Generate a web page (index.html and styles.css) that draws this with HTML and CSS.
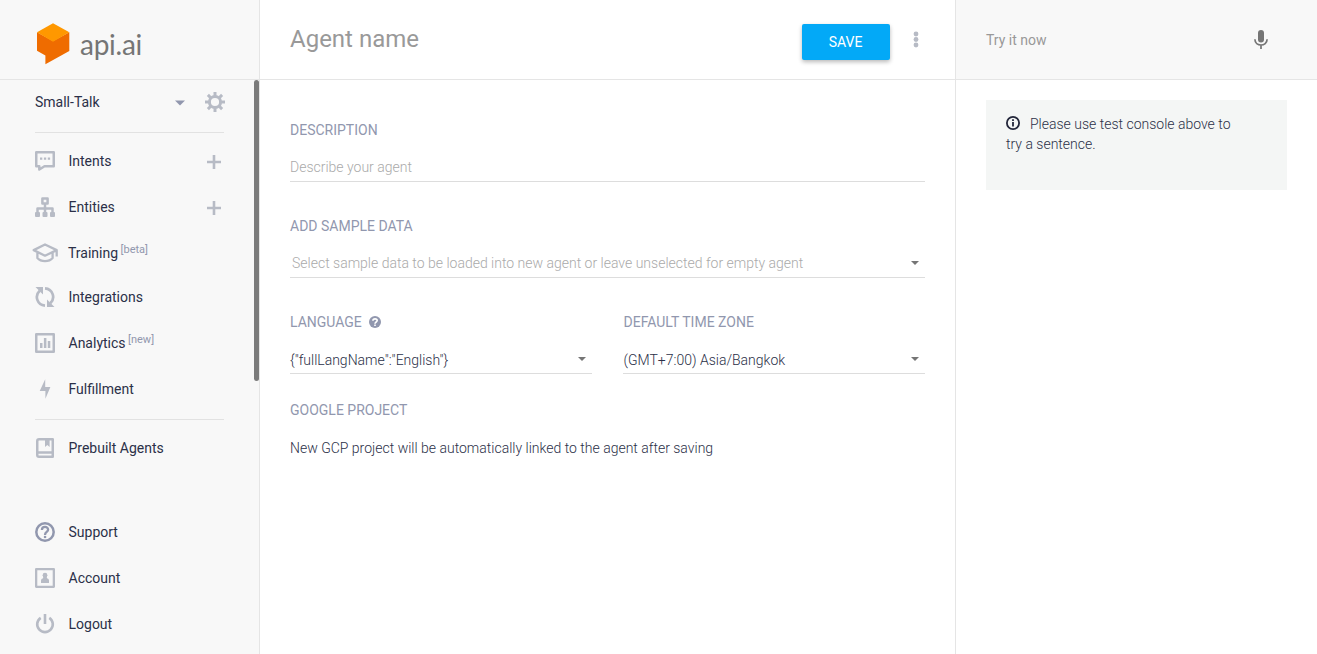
FILE: index.html
```html
<!DOCTYPE html>
<html lang="en">
<head>
<meta charset="utf-8">
<title>Agent</title>
<link rel="stylesheet" href="styles.css">
</head>
<body>
<div class="app">
  <aside class="sidebar">
    <div class="brand">
      <svg class="brand-mark" width="33" height="42" viewBox="0 0 33 42"><path fill="#ef6c00" d="M0 9.3 16 18 32.3 9.3V28L8.4 41.2V32.4L0 27.7z"/><path fill="#ff9800" d="M16 .2 32.3 9.3 16 18.7 0 9.3z"/></svg>
      <span class="brand-name">api.ai</span>
    </div>
    <div class="scroll-thumb"></div>
    <div class="agent">
      <span class="agent-name">Small-Talk</span>
      <svg class="agent-caret" width="10" height="6" viewBox="0 0 10 6"><path d="M0 .5h10L5 5.5z"/></svg>
      <svg class="gear" width="20" height="20" viewBox="0 0 20 20"><circle cx="10" cy="10" r="5.6" fill="none" stroke="currentColor" stroke-width="3"/><path stroke="currentColor" stroke-width="3" d="M10 0v4M10 16v4M0 10h4M16 10h4M2.900 2.900l2.800 2.800M14.300 14.300l2.800 2.800M17.100 2.900l-2.800 2.800M5.700 14.300l-2.800 2.800"/></svg>
    </div>
    <nav class="menu">
      <a class="item"><span class="icon"><svg width="20" height="20" viewBox="0 0 20 20"><path fill="none" stroke="currentColor" stroke-width="2.500" stroke-linejoin="round" d="M1.250 1.250h17.500v14H9.500l-5.200 3.300v-3.300H1.250z"/><path fill="currentColor" d="M5 6.500h2.300v2.300H5zM8.900 6.500h2.300v2.300H8.900zM12.800 6.500h2.300v2.300h-2.300z"/></svg></span>Intents<svg class="plus" width="14" height="14" viewBox="0 0 14 14"><path d="M7 0v14M0 7h14"/></svg></a>
      <a class="item"><span class="icon"><svg width="20" height="20" viewBox="0 0 20 20"><path fill="none" stroke="currentColor" stroke-width="2.500" stroke-linejoin="round" d="M7.400 1.500h5.200v5H7.400zM10 6.500V16M2.500 16v-4.500h15V16"/><rect x="0" y="15" width="5" height="5" rx="1" fill="currentColor"/><rect x="7.500" y="15" width="5" height="5" rx="1" fill="currentColor"/><rect x="15" y="15" width="5" height="5" rx="1" fill="currentColor"/></svg></span>Entities<svg class="plus" width="14" height="14" viewBox="0 0 14 14"><path d="M7 0v14M0 7h14"/></svg></a>
      <a class="item item-training"><span class="icon"><svg width="26" height="20" viewBox="0 0 26 20"><path fill="none" stroke="currentColor" stroke-width="2.300" stroke-linejoin="round" d="M1.700 7.100 13 1.500l11.700 5.600L13 12.700zM5.400 9v6c3.600 4.200 11.600 4.200 15.200 0V9M24.700 7v6.500"/></svg></span>Training<sup>[beta]</sup></a>
      <a class="item"><span class="icon"><svg width="20" height="20" viewBox="0 0 20 20"><path fill="none" stroke="currentColor" stroke-width="2.700" d="M10 18.600C2.200 18 -.8 9 4.700 3.800M10 1.400c7.800.6 10.800 9.600 5.300 14.800"/><path fill="currentColor" d="M.5 0H8v7.500zM19.500 20H12v-7.500z"/></svg></span>Integrations</a>
      <a class="item"><span class="icon"><svg width="20" height="20" viewBox="0 0 20 20"><path fill="none" stroke="currentColor" stroke-width="2.500" stroke-linejoin="round" d="M1.250 1.250h17.500v17.500H1.250z"/><path fill="currentColor" d="M5 10h2.500v5H5zM8.900 5h2.500v10H8.900zM12.800 8h2.500v7h-2.500z"/></svg></span>Analytics<sup>[new]</sup></a>
      <a class="item"><span class="icon"><svg width="20" height="20" viewBox="0 0 20 20"><path fill="currentColor" d="M10.200 .2V8h5.200L10.400 19.800V12H4.700z"/></svg></span>Fulfillment</a>
    </nav>
    <nav class="menu menu-prebuilt">
      <a class="item"><span class="icon"><svg width="20" height="20" viewBox="0 0 20 20"><path fill="none" stroke="currentColor" stroke-width="2.500" stroke-linejoin="round" d="M4 1.250h13.750v17.500H4Q2.250 18.750 2.250 17V3Q2.250 1.250 4 1.250zM2.250 14.500h15.500"/><path fill="currentColor" d="M10 1h4.600v8L12.300 7 10 9z"/></svg></span>Prebuilt Agents</a>
    </nav>
    <nav class="menu menu-user">
      <a class="item"><span class="icon icon-dark"><svg width="20" height="20" viewBox="0 0 20 20"><circle cx="10" cy="10" r="8.700" fill="none" stroke="currentColor" stroke-width="2.500"/><path fill="none" stroke="currentColor" stroke-width="2.300" d="M6.900 8c0-4 6.200-4 6.200-.3C13.100 10 10 9.900 10 12.900"/><path fill="currentColor" d="M8.900 13.900h2.300v2.200H8.900z"/></svg></span>Support</a>
      <a class="item"><span class="icon"><svg width="20" height="20" viewBox="0 0 20 20"><path fill="none" stroke="currentColor" stroke-width="2.300" stroke-linejoin="round" d="M1.150 1.150h17.700v17.700H1.150z"/><circle cx="10" cy="7.200" r="2.400" fill="currentColor"/><path fill="currentColor" d="M8.500 8h3l.5 2.200q2 .5 2 2.300V15H6v-2.500q0-1.800 2-2.300z"/></svg></span>Account</a>
      <a class="item"><span class="icon"><svg width="20" height="20" viewBox="0 0 20 20"><path fill="none" stroke="currentColor" stroke-width="2.600" d="M10 0v10M5.700 3.800a7.800 7.800 0 1 0 8.600 0"/></svg></span>Logout</a>
    </nav>
  </aside>

  <main class="main">
    <header class="main-head">
      <h1>Agent name</h1>
      <button class="save">SAVE</button>
      <svg class="more" width="6" height="18" viewBox="0 0 6 18"><circle cx="3" cy="3" r="2.400"/><circle cx="3" cy="8.500" r="2.400"/><circle cx="3" cy="14" r="2.400"/></svg>
    </header>
    <div class="form">
      <section class="field">
        <h2>DESCRIPTION</h2>
        <div class="control placeholder">Describe your agent</div>
      </section>
      <section class="field">
        <h2>ADD SAMPLE DATA</h2>
        <div class="control placeholder select select-sample">Select sample data to be loaded into new agent or leave unselected for empty agent</div>
      </section>
      <div class="pair">
        <section class="field">
          <h2>LANGUAGE <svg class="help" width="12" height="12" viewBox="0 0 12 12"><circle cx="6" cy="6" r="6" fill="#9197ae"/><path fill="none" stroke="#fff" stroke-width="1.600" d="M3.900 4.800c0-2.700 4.300-2.500 4.300-.2C8.200 6 6 6 6 7.700"/><path fill="#fff" d="M5.200 8.400h1.600V10H5.200z"/></svg></h2>
          <div class="control select">{"fullLangName":"English"}</div>
        </section>
        <section class="field field-zone">
          <h2>DEFAULT TIME ZONE</h2>
          <div class="control select">(GMT+7:00) Asia/Bangkok</div>
        </section>
      </div>
      <section class="project">
        <h2>GOOGLE PROJECT</h2>
        <p>New GCP project will be automatically linked to the agent after saving</p>
      </section>
    </div>
  </main>

  <aside class="console">
    <header class="console-head">
      <span>Try it now</span>
      <svg width="14" height="20" viewBox="0 0 14 20"><rect x="4" y="0" width="6" height="12.500" rx="3" fill="#757575"/><path fill="none" stroke="#757575" stroke-width="1.700" d="M.9 9.300c0 7.600 12.200 7.600 12.200 0M7 15v4"/></svg>
    </header>
    <div class="notice"><svg width="14" height="14" viewBox="0 0 14 14"><circle cx="7" cy="7" r="6.100" fill="none" stroke="#22263a" stroke-width="1.800"/><path fill="#22263a" d="M6.100 3.300h1.800v1.600H6.100zM6.100 6h1.800v4.600H6.100z"/></svg>Please use test console above to try a sentence.</div>
  </aside>
</div>
</body>
</html>
```
FILE: styles.css
```css
* { box-sizing: border-box; }
body { margin: 0; font: 14px/20px Roboto, "Liberation Sans", sans-serif; color: #2b3048; background: #fff; overflow: hidden; }
h1, h2, p { margin: 0; }
.app { display: grid; grid-template-columns: 260px 696px 361px; height: 654px; }

.sidebar { position: relative; background: #f8f8f8; border-right: 1px solid #e5e5e5; }
.brand { display: flex; height: 80px; padding: 23px 0 0 37px; border-bottom: 1px solid #e5e5e5; }
.brand-name { margin: 6px 0 0 10px; font: 28px/30px Lato, sans-serif; letter-spacing: -.25px; color: #757575; }
.scroll-thumb { position: absolute; top: 80px; right: 0; width: 5px; height: 301px; border-radius: 3px; background: #7b7b7b; }
.agent { display: flex; align-items: center; height: 53px; margin: 0 35px; padding-bottom: 8px; border-bottom: 1px solid #e2e2e2; }
.agent-name { flex: 1; }
.agent-caret { margin: 2px 20px 0 0; fill: #9197ae; }
.gear { margin-right: -1px; color: #b7bbc5; }
.menu { padding: 5px 0 6px; margin: 0 35px; }
.item { display: flex; align-items: center; height: 46px; white-space: nowrap; }
.item-training { height: 44px; padding-top: 2px; }
.item-training .icon { margin-right: 13px; }
.icon { display: flex; justify-content: center; width: 20px; flex: none; margin-right: 13.500px; color: #b7bbc5; }
.icon svg { flex: none; }
.icon-dark { color: #9197ae; }
.plus { margin: 2px 3px 0 auto; fill: none; stroke: #b7bbc5; stroke-width: 2.600; }
sup { margin: -6px 0 0 2.500px; font-size: 11px; line-height: 14px; color: #9197ae; }
.menu-prebuilt { border-top: 1px solid #e2e2e2; padding: 5px 0 0; margin-top: 1px; }
.menu-user { padding: 38px 0 0; }

.main { border-right: 1px solid #e5e5e5; }
.main-head { display: flex; height: 80px; padding: 24px 36px 0 30px; border-bottom: 1px solid #e5e5e5; }
h1 { flex: 1; font-size: 24px; line-height: 30px; font-weight: 400; color: #999; }
.save { width: 88px; height: 36px; padding: 0 1px 0 0; border: 0; border-radius: 2px; background: #03a9f7; color: #fff; font: 14px/36px Roboto, sans-serif; box-shadow: 0 2px 4px rgba(0,0,0,.28); }
.more { margin: 7px 0 0 23px; fill: #b7bbc5; }
.form { padding: 40px 30px 0; }
h2 { font-size: 14px; line-height: 20px; font-weight: 400; color: #9197ae; }
.field { height: 96px; }
.control { height: 42px; padding-top: 17px; line-height: 20px; border-bottom: 1px solid #ddd; font-weight: 300; }
.placeholder { color: #aaa; }
.select { display: flex; justify-content: space-between; padding-right: 6.500px; }
.select::after { content: ""; margin-top: 8px; border: 4px solid transparent; border-top-color: #757575; border-bottom: 0; height: 0; }
.select-sample { padding-left: 2px; }
.pair { display: grid; grid-template-columns: 302px 302px; column-gap: 31px; }
.pair .field { height: 88px; }
.pair .control { padding-top: 18px; }
.pair .select::after { margin-top: 7px; }
.field-zone h2, .field-zone .control { text-indent: .5px; }
.help { margin-left: 4px; vertical-align: -1px; }
.project p { margin-top: 18px; font-weight: 300; }

.console-head { display: flex; justify-content: space-between; height: 80px; padding: 30px 49px 0 30px; background: #f8f8f8; border-bottom: 1px solid #e5e5e5; color: #999; }
.notice { width: 301px; height: 90px; margin: 20px 0 0 30px; padding: 14px 50px 0 20px; background: #f4f6f5; font-weight: 300; }
.notice svg { margin-right: 10px; vertical-align: -1px; }
```
